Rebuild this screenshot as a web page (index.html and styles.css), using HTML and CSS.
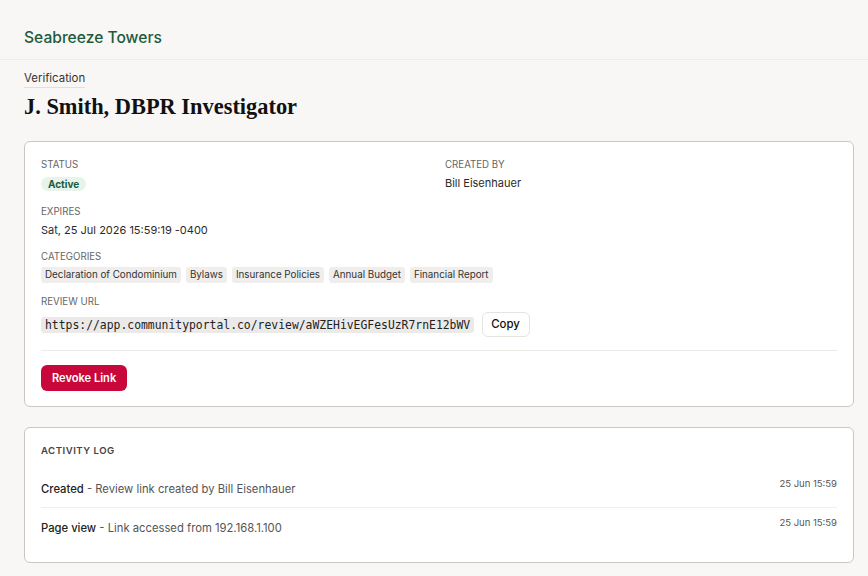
FILE: index.html
```html
<!DOCTYPE html>
<html>
<head>
  <title>Verification - Seabreeze Towers</title>
  <link rel="stylesheet" href="styles.css">
</head>
<body>
  <header class="topBar">
    <div class="brand">Seabreeze Towers</div>
  </header>

  <main class="page">
    <div class="eyebrow">Verification</div>
    <h1 class="pageTitle">J. Smith, DBPR Investigator</h1>

    <section class="card">
      <div class="infoGrid">
        <div class="field">
          <div class="fieldLabel">Status</div>
          <span class="badge">Active</span>
        </div>
        <div class="field">
          <div class="fieldLabel">Created by</div>
          <div class="fieldValue">Bill Eisenhauer</div>
        </div>
        <div class="field">
          <div class="fieldLabel">Expires</div>
          <div class="fieldValue">Sat, 25 Jul 2026 15:59:19 -0400</div>
        </div>
      </div>

      <div class="field fieldCategories">
        <div class="fieldLabel">Categories</div>
        <div class="chips">
          <span class="chip">Declaration of Condominium</span>
          <span class="chip">Bylaws</span>
          <span class="chip">Insurance Policies</span>
          <span class="chip">Annual Budget</span>
          <span class="chip">Financial Report</span>
        </div>
      </div>

      <div class="field">
        <div class="fieldLabel">Review URL</div>
        <div class="urlRow">
          <code class="url">https://app.communityportal.co/review/aWZEHivEGFesUzR7rnE12bWV</code>
          <button class="btnCopy">Copy</button>
        </div>
      </div>

      <div class="cardActions">
        <button class="btnDanger">Revoke Link</button>
      </div>
    </section>

    <section class="card">
      <h2 class="sectionTitle">Activity Log</h2>
      <ul class="logList">
        <li class="logItem">
          <div class="logText"><strong>Created</strong> - Review link created by Bill Eisenhauer</div>
          <div class="logTime">25 Jun 15:59</div>
        </li>
        <li class="logItem">
          <div class="logText"><strong>Page view</strong> - Link accessed from 192.168.1.100</div>
          <div class="logTime">25 Jun 15:59</div>
        </li>
      </ul>
    </section>
  </main>
</body>
</html>
```

FILE: styles.css
```css
body {
  margin: 0;
  background-color: #f8f7f5;
  color: #1c1c1c;
  font-family: Inter, "Noto Sans", sans-serif;
}

.topBar {
  padding: 27px 24px 10px;
  border-bottom: 1px solid #eeece8;
}

.brand {
  color: #1d5b3c;
  font-size: 15.6px;
  font-weight: 500;
  line-height: 22px;
}

.page {
  padding: 6px 14px 24px 24px;
}

.eyebrow {
  display: inline-block;
  font-size: 11.4px;
  line-height: 16px;
  color: #333;
  border-bottom: 1px solid #e2e0dc;
  padding-bottom: 1px;
}

.pageTitle {
  margin: 6px 0 21px;
  font-family: "Liberation Serif", "Times New Roman", serif;
  font-size: 22.4px;
  font-weight: bold;
  line-height: 26px;
  color: #111;
}

.card {
  background-color: #fff;
  border: 1px solid #c9c7c3;
  border-radius: 6px;
  padding: 16px 16px 15px;
  margin-bottom: 20px;
}

.infoGrid {
  display: grid;
  grid-template-columns: 1fr 1fr;
  column-gap: 12px;
}

.field {
  margin-bottom: 11px;
}

.fieldCategories {
  margin-bottom: 12px;
}

.fieldLabel {
  font-size: 9.7px;
  line-height: 14px;
  text-transform: uppercase;
  color: #666;
  margin-bottom: 3px;
}

.fieldValue {
  font-size: 11px;
  line-height: 17px;
  color: #2a2a2a;
}

.badge {
  display: block;
  width: fit-content;
  margin-top: 5px;
  margin-bottom: 3px;
  background-color: #e8f3ec;
  color: #1d5b3c;
  font-size: 10px;
  font-weight: 700;
  line-height: 14px;
  padding: 0 7px;
  border-radius: 8px;
}

.chips {
  display: flex;
  flex-wrap: wrap;
  gap: 5px;
  margin-top: 2px;
}

.chip {
  background-color: #efeeec;
  color: #333;
  font-size: 9.8px;
  line-height: 16px;
  padding: 0 4px;
  border-radius: 3px;
}

.urlRow {
  display: flex;
  align-items: center;
  gap: 8px;
}

.url {
  font-family: "DejaVu Sans Mono", monospace;
  font-size: 11.4px;
  line-height: 16px;
  background-color: #ebeae8;
  color: #222;
  padding: 0 4px;
  border-radius: 3px;
}

.btnCopy {
  font-family: inherit;
  font-size: 11.4px;
  font-weight: 500;
  line-height: 15px;
  color: #111;
  background-color: #fff;
  border: 1px solid #e6e4e0;
  border-radius: 6px;
  padding: 4px 9px 4px 8px;
  cursor: pointer;
}

.cardActions {
  border-top: 1px solid #ecebe8;
  margin-top: 13px;
  padding-top: 14px;
}

.btnDanger {
  font-family: inherit;
  font-size: 11.1px;
  font-weight: 600;
  line-height: 14px;
  color: #fff;
  background-color: #c8083b;
  border: none;
  border-radius: 6px;
  padding: 6px 11px;
  cursor: pointer;
}

.sectionTitle {
  margin: 0 0 11px;
  font-size: 9.6px;
  font-weight: 600;
  line-height: 14px;
  letter-spacing: 0.5px;
  text-transform: uppercase;
  color: #444;
}

.logList {
  list-style: none;
  margin: 0;
  padding: 0;
}

.logItem {
  display: flex;
  justify-content: space-between;
  align-items: flex-start;
  padding: 8px 0 9px;
  border-bottom: 1px solid #efeeeb;
}

.logItem:last-child {
  border-bottom: none;
  padding-bottom: 10px;
}

.logText {
  font-size: 11.25px;
  line-height: 17px;
  color: #555;
  padding-top: 4px;
}

.logText strong {
  font-weight: 500;
  color: #222;
}

.logTime {
  font-size: 9.5px;
  line-height: 14px;
  color: #555;
}
```
